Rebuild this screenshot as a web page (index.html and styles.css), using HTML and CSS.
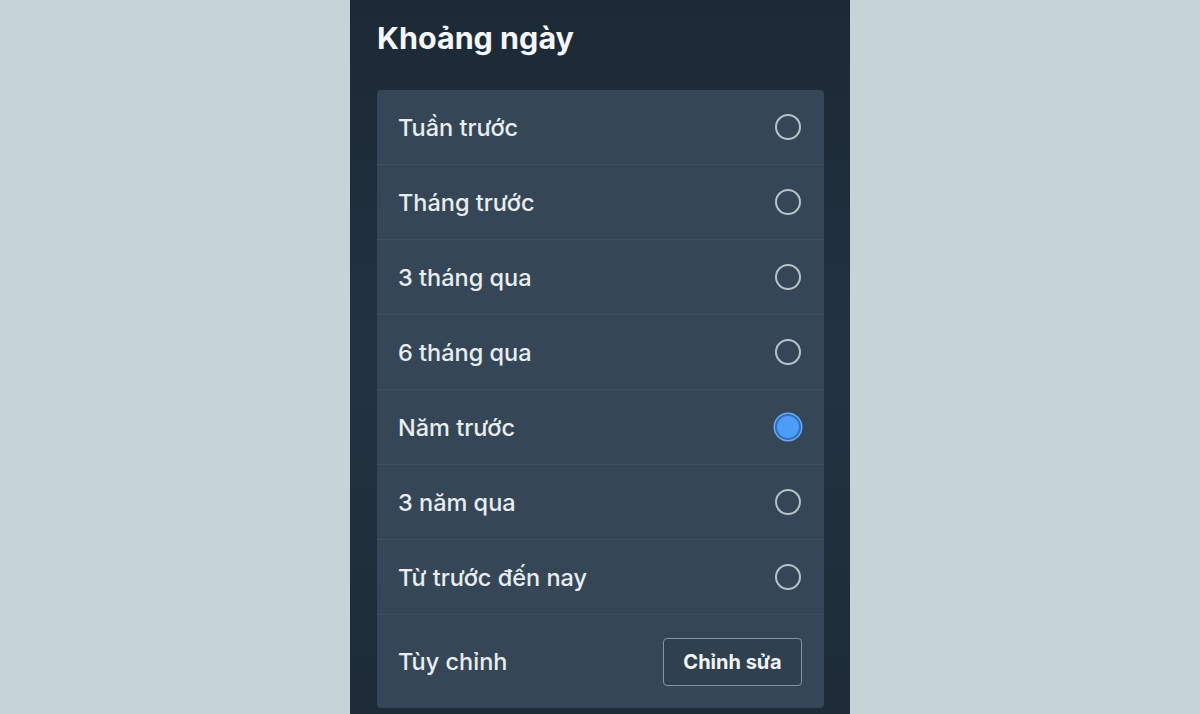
FILE: index.html
```html
<!DOCTYPE html>
<html lang="vi">
<head>
  <meta charset="UTF-8" />
  <meta name="viewport" content="width=device-width, initial-scale=1.0"/>
  <title>Khoảng ngày</title>
  <link rel="stylesheet" href="styles.css">
</head>
<body>
  <div class="screen">
    <h2 class="title">Khoảng ngày</h2>

    <div class="card">
      <label class="row"><span>Tuần trước</span><span class="radio"></span></label>
      <label class="row"><span>Tháng trước</span><span class="radio"></span></label>
      <label class="row"><span>3 tháng qua</span><span class="radio"></span></label>
      <label class="row"><span>6 tháng qua</span><span class="radio"></span></label>
      <label class="row"><span>Năm trước</span><span class="radio checked"></span></label>
      <label class="row"><span>3 năm qua</span><span class="radio"></span></label>
      <label class="row"><span>Từ trước đến nay</span><span class="radio"></span></label>
      <div class="row custom">
        <span>Tùy chỉnh</span>
        <button class="edit-btn">Chỉnh sửa</button>
      </div>
    </div>
  </div>
</body>
</html>
```

FILE: styles.css
```css
* {
  box-sizing: border-box;
  margin: 0; padding: 0;
}
body {
  font-family: Inter, 'Noto Sans', sans-serif;
  background: #c4d4d7;
  color: #e8edf1;
}

.screen {
  width: 500px;
  height: 714px;
  margin: 0 auto;
  padding: 18px 26px 0 27px;
  background: linear-gradient(180deg, #1c2937 0%, #223240 50%, #1e2c39 100%);
  overflow: hidden;
}

.title {
  font-size: 30.5px;
  font-weight: 700;
  color: #f4f6f8;
  line-height: 40px;
}

.card {
  margin-top: 32px;
  background: #354756;
  border-radius: 4px;
  display: flex;
  flex-direction: column;
}

.row {
  display: flex;
  align-items: center;
  justify-content: space-between;
  height: 75px;
  padding: 0 23px 0 21px;
  border-bottom: 1px solid #3c4f5f;
  font-size: 23.5px;
  font-weight: 500;
}
.row.custom {
  height: 93px;
  border-bottom: none;
  padding-right: 22px;
}

.radio {
  width: 26px;
  height: 26px;
  border: 2px solid #b9c2ca;
  border-radius: 50%;
}
.radio.checked {
  border: 2px solid #2f6fc4;
  background: #4d9cf8;
  box-shadow: 0 0 0 1.5px #6aa9ee;
}

.edit-btn {
  width: 139px;
  height: 48px;
  background: #2f404e;
  border: 1.5px solid #8895a1;
  border-radius: 4px;
  color: #f2f5f7;
  font-family: inherit;
  font-size: 20px;
  font-weight: 700;
  cursor: pointer;
}
```
